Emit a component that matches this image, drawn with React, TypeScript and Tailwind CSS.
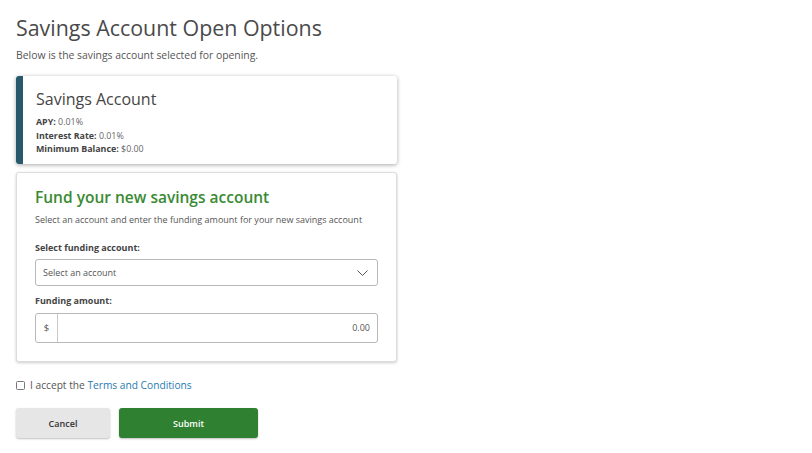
import React from "react";

export default function App() {
  return (
    <div className="w-[812px] h-[453px] bg-white text-[#4a4a4a] px-4 pt-[13px]" style={{ fontFamily: '"Open Sans", sans-serif' }}>
      <h1 className="text-[21.4px] leading-[30px] text-[#4a4a4a]">Savings Account Open Options</h1>
      <p className="text-[10.4px] leading-[14px] mt-[5px] text-[#555]">Below is the savings account selected for opening.</p>

      <div className="mt-[14px] w-[381px] h-[88px] flex rounded-[3px] bg-white shadow-[0_1px_4px_rgba(0,0,0,0.35)] overflow-hidden">
        <div className="w-[7px] bg-[#28586b]" />
        <div className="pl-[13px] pt-[12px]">
          <div className="text-[16px] leading-[22px] text-[#454545]">Savings Account</div>
          <div className="mt-[5px] text-[8.9px] leading-[13.5px] text-[#444]">
            <div><span className="font-bold">APY:</span> <span className="text-[#666]">0.01%</span></div>
            <div><span className="font-bold">Interest Rate:</span> <span className="text-[#666]">0.01%</span></div>
            <div><span className="font-bold">Minimum Balance:</span> <span className="text-[#666]">$0.00</span></div>
          </div>
        </div>
      </div>

      <div className="mt-[8px] w-[381px] h-[190px] rounded-[3px] border border-[#dcdcdc] bg-white shadow-[0_1px_3px_rgba(0,0,0,0.2)] px-[18px] pt-[12px]">
        <div className="text-[15.5px] leading-[24px] text-[#3a8a34] font-semibold">Fund your new savings account</div>
        <div className="mt-[5px] text-[9px] leading-[12px] text-[#555]">Select an account and enter the funding amount for your new savings account</div>
        <div className="mt-[16px] text-[9px] leading-[12px] font-bold text-[#444]">Select funding account:</div>
        <div className="mt-[5px] h-[27px] w-[343px] border border-[#b8b8b8] rounded-[3px] flex items-center justify-between pl-[7px] pr-[9px]">
          <span className="text-[9px] text-[#555]">Select an account</span>
          <svg width="11" height="6" viewBox="0 0 11 6" fill="none">
            <path d="M0.5 0.5 L5.5 5.5 L10.5 0.5" stroke="#555" strokeWidth="1" />
          </svg>
        </div>
        <div className="mt-[9px] text-[9px] leading-[12px] font-bold text-[#444]">Funding amount:</div>
        <div className="mt-[6px] h-[30px] w-[343px] border border-[#b8b8b8] rounded-[3px] flex items-stretch">
          <div className="w-[22px] border-r border-[#c8c8c8] flex items-center justify-center text-[9.5px] text-[#555]">$</div>
          <div className="flex-1 flex items-center justify-end pr-[7px] text-[9px] text-[#555]">0.00</div>
        </div>
      </div>

      <div className="mt-[16px] flex items-center gap-[5px] text-[10.2px] text-[#555]">
        <span className="w-[9px] h-[9px] border border-[#777] rounded-[1.5px] inline-block" />
        <span>I accept the <span className="text-[#1f7ab0]">Terms and Conditions</span></span>
      </div>

      <div className="mt-[15px] flex gap-[9px]">
        <button className="w-[94px] h-[30px] rounded-[3px] bg-[#e6e6e6] shadow-[0_1px_2px_rgba(0,0,0,0.25)] text-[9px] font-semibold text-[#333]">Cancel</button>
        <button className="w-[139px] h-[30px] rounded-[3px] bg-[#2f8131] shadow-[0_1px_2px_rgba(0,0,0,0.25)] text-[9px] font-semibold text-white">Submit</button>
      </div>
    </div>
  );
}
